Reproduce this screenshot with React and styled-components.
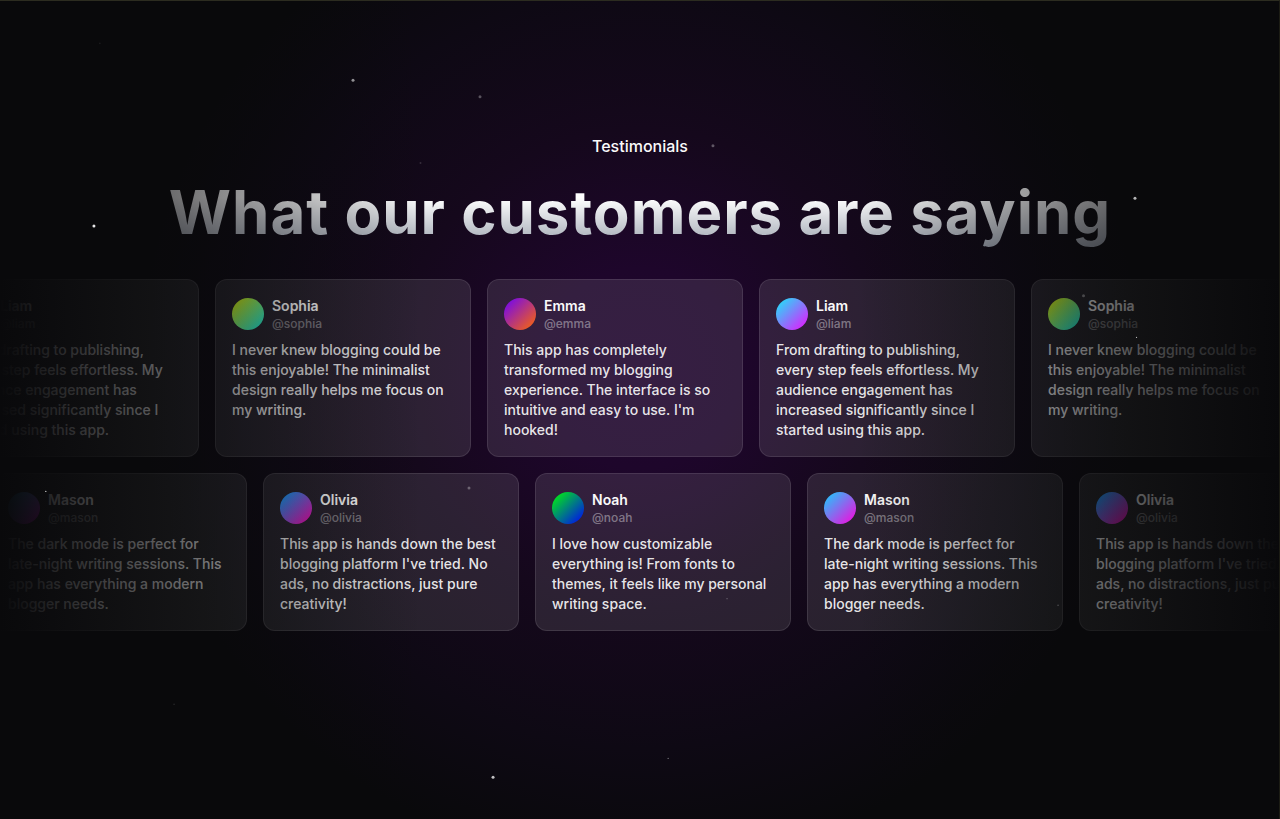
import React from "react";
import styled, { createGlobalStyle } from "styled-components";

const GlobalStyle = createGlobalStyle`
  *, *::before, *::after { box-sizing: border-box; }
  body {
    margin: 0;
    background: #09090b;
    color: #fafafa;
    font-family: Inter, "Liberation Sans", sans-serif;
  }
  h2, p, figure, blockquote { margin: 0; }
`;

const Section = styled.section`
  position: relative;
  min-height: 100vh;
  padding: 134px 0 188px;
  overflow: hidden;
  background: radial-gradient(circle 500px at 50% 45%, #20052e 0%, #1e062b 20%, #15081c 48%, #0e0914 76%, #09090b 100%);

  &::after {
    content: "";
    position: absolute;
    inset: 0;
    border-top: 1px solid #2c2c20;
    border-right: 1px solid #1c1c14;
    pointer-events: none;
  }
`;

const Header = styled.header`
  display: flex;
  flex-direction: column;
  align-items: center;
  gap: 18px;
  margin-bottom: 31px;
  text-align: center;
`;

const Eyebrow = styled.p`
  font-size: 16px;
  line-height: 24px;
  font-weight: 500;
`;

const Title = styled.h2`
  font-size: 60px;
  line-height: 72px;
  font-weight: 700;
  letter-spacing: 1px;
  color: transparent;
  background: linear-gradient(to bottom, #ffffff 30%, #9ca3af 100%);
  background-clip: text;
  -webkit-background-clip: text;
`;

const Rows = styled.div`
  display: flex;
  flex-direction: column;
  gap: 16px;
`;

const Marquee = styled.div`
  display: flex;
  justify-content: center;
  gap: 16px;
  overflow: hidden;
  padding-left: ${(p) => p.$lead || 0}px;
  padding-right: ${(p) => p.$trail || 0}px;
`;

const Card = styled.figure`
  flex: 0 0 256px;
  padding: 16px;
  border: 1px solid rgba(255, 255, 255, 0.1);
  border-radius: 12px;
  background: rgba(255, 255, 255, 0.1);
`;

const Person = styled.figcaption`
  display: flex;
  align-items: center;
  gap: 8px;
`;

const Avatar = styled.span`
  flex: none;
  width: 32px;
  height: 32px;
  border-radius: 50%;
  background: linear-gradient(135deg, ${(p) => p.$from}, ${(p) => p.$to});
`;

const Names = styled.div`
  display: flex;
  flex-direction: column;
`;

const Name = styled.span`
  font-size: 14px;
  line-height: 20px;
  font-weight: 600;
`;

const Handle = styled.span`
  font-size: 12px;
  line-height: 16px;
  font-weight: 500;
  color: rgba(255, 255, 255, 0.4);
`;

const Quote = styled.blockquote`
  margin-top: 8px;
  font-size: 14px;
  line-height: 20px;
  font-weight: 500;
  color: rgba(255, 255, 255, 0.9);
`;

const EdgeFade = styled.div`
  position: absolute;
  top: 0;
  bottom: 0;
  ${(p) => p.$side}: 0;
  width: 33%;
  pointer-events: none;
  background: linear-gradient(to ${(p) => (p.$side === "left" ? "right" : "left")}, #09090b, transparent);
`;

const Stars = styled.svg`
  position: absolute;
  inset: 0;
  width: 100%;
  height: 100%;
  pointer-events: none;
`;

const people = {
  liam: { name: "Liam", from: "#12f0f8", to: "#f00cff", text: "From drafting to publishing, every step feels effortless. My audience engagement has increased significantly since I started using this app." },
  sophia: { name: "Sophia", from: "#e8f500", to: "#10f0ee", text: "I never knew blogging could be this enjoyable! The minimalist design really helps me focus on my writing." },
  emma: { name: "Emma", from: "#6a00ff", to: "#ff6a00", text: "This app has completely transformed my blogging experience. The interface is so intuitive and easy to use. I'm hooked!" },
  mason: { name: "Mason", from: "#12d4ff", to: "#ff00dc", text: "The dark mode is perfect for late-night writing sessions. This app has everything a modern blogger needs." },
  olivia: { name: "Olivia", from: "#00aaff", to: "#ff00aa", text: "This app is hands down the best blogging platform I've tried. No ads, no distractions, just pure creativity!" },
  noah: { name: "Noah", from: "#00ff00", to: "#0000ff", text: "I love how customizable everything is! From fonts to themes, it feels like my personal writing space." },
};

const topRow = ["liam", "sophia", "emma", "liam", "sophia"];
const bottomRow = ["mason", "olivia", "noah", "mason", "olivia"];

const stars = [
  { x: 27.58, y: 9.8, r: 1.5, o: 0.55 },
  { x: 37.5, y: 11.8, r: 1.5, o: 0.3 },
  { x: 55.7, y: 17.8, r: 1.5, o: 0.32 },
  { x: 88.67, y: 24.2, r: 1.5, o: 0.7 },
  { x: 7.34, y: 27.6, r: 1.5, o: 0.9 },
  { x: 32.85, y: 19.9, r: 1, o: 0.15 },
  { x: 84.65, y: 36.1, r: 1.5, o: 0.22 },
  { x: 88.79, y: 41.2, r: 0.6, o: 0.7 },
  { x: 3.58, y: 60, r: 0.6, o: 0.9 },
  { x: 36.64, y: 59.6, r: 1.5, o: 0.3 },
  { x: 56.8, y: 73.1, r: 0.6, o: 0.35 },
  { x: 82.66, y: 73.9, r: 0.8, o: 0.25 },
  { x: 38.52, y: 94.9, r: 1.5, o: 0.75 },
  { x: 52.2, y: 92.6, r: 0.7, o: 0.4 },
  { x: 13.6, y: 86, r: 0.8, o: 0.12 },
  { x: 7.8, y: 5.3, r: 0.8, o: 0.08 },
];

function Testimonial({ id }) {
  const person = people[id];
  return (
    <Card>
      <Person>
        <Avatar $from={person.from} $to={person.to} />
        <Names>
          <Name>{person.name}</Name>
          <Handle>@{id}</Handle>
        </Names>
      </Person>
      <Quote>{person.text}</Quote>
    </Card>
  );
}

export default function App() {
  return (
    <>
      <GlobalStyle />
      <Section>
        <Header>
          <Eyebrow>Testimonials</Eyebrow>
          <Title>What our customers are saying</Title>
        </Header>
        <Rows>
          <Marquee $trail={50}>
            {topRow.map((id, i) => <Testimonial key={i} id={id} />)}
          </Marquee>
          <Marquee $lead={46}>
            {bottomRow.map((id, i) => <Testimonial key={i} id={id} />)}
          </Marquee>
        </Rows>
        <EdgeFade $side="left" />
        <EdgeFade $side="right" />
        <Stars aria-hidden="true">
          {stars.map((s, i) => (
            <circle key={i} cx={`${s.x}%`} cy={`${s.y}%`} r={s.r} fill="#ffffff" opacity={s.o} />
          ))}
        </Stars>
      </Section>
    </>
  );
}
